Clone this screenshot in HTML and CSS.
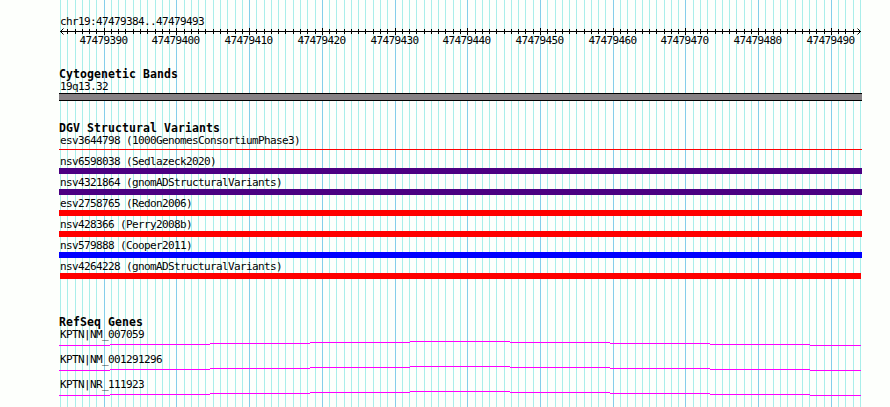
FILE: index.html
```html
<!DOCTYPE html>
<html lang="en">
<head>
<meta charset="utf-8">
<title>chr19:47479384..47479493</title>
<link rel="stylesheet" href="styles.css">
</head>
<body>
<main class="browser">
  <svg class="grid" width="803" height="407" shape-rendering="crispEdges" aria-hidden="true">
    <defs>
      <pattern id="minor" x="1" y="0" width="80" height="10" patternUnits="userSpaceOnUse">
        <path class="minor" d="M.5 0v10M7.5 0v10M15.5 0v10M22.5 0v10M29.5 0v10M36.5 0v10M44.5 0v10M51.5 0v10M58.5 0v10M65.5 0v10M73.5 0v10"/>
      </pattern>
    </defs>
    <rect width="803" height="407" fill="url(#minor)"/>
    <path class="major" d="M45.5 0v407M117.5 0v407M190.5 0v407M263.5 0v407M336.5 0v407M408.5 0v407M481.5 0v407M554.5 0v407M626.5 0v407M699.5 0v407M772.5 0v407"/>
  </svg>

  <header class="scale">
    <p class="label">chr19:47479384..47479493</p>
    <svg class="ruler" width="803" height="20">
      <defs>
        <pattern id="ticks" x="1" y="1" width="80" height="5" patternUnits="userSpaceOnUse">
          <path class="ink" d="M7.5 0v5M15.5 0v5M22.5 0v5M29.5 0v5M36.5 0v5M44.5 0v5M51.5 0v5M58.5 0v5M65.5 0v5M73.5 0v5M.5 0v5"/>
        </pattern>
      </defs>
      <g shape-rendering="crispEdges">
        <rect x="5" y="1" width="794" height="5" fill="url(#ticks)"/>
        <path class="ink" d="M1 3.5H802M45.5 0v7M117.5 0v7M190.5 0v7M263.5 0v7M336.5 0v7M408.5 0v7M481.5 0v7M554.5 0v7M626.5 0v7M699.5 0v7M772.5 0v7"/>
      </g>
      <path class="ink" d="M4.5 .5l-3 3l3 3M798.5 .5l3 3l-3 3"/>
      <g class="numbers">
        <text x="20.5" y="16">47479390</text><text x="92.5" y="16">47479400</text><text x="165.5" y="16">47479410</text><text x="238.5" y="16">47479420</text><text x="311.5" y="16">47479430</text><text x="383.5" y="16">47479440</text><text x="456.5" y="16">47479450</text><text x="529.5" y="16">47479460</text><text x="601.5" y="16">47479470</text><text x="674.5" y="16">47479480</text><text x="747.5" y="16">47479490</text>
      </g>
    </svg>
  </header>

  <section class="track bands">
    <h2>Cytogenetic Bands</h2>
    <p class="label">19q13.32</p>
    <div class="band"></div>
  </section>

  <section class="track variants">
    <h2>DGV Structural Variants</h2>
    <div class="feature"><p class="label">esv3644798 (1000GenomesConsortiumPhase3)</p><div class="bar thin"></div></div>
    <div class="feature"><p class="label">nsv6598038 (Sedlazeck2020)</p><div class="bar indigo"></div></div>
    <div class="feature"><p class="label">nsv4321864 (gnomADStructuralVariants)</p><div class="bar indigo"></div></div>
    <div class="feature"><p class="label">esv2758765 (Redon2006)</p><div class="bar red"></div></div>
    <div class="feature"><p class="label">nsv428366 (Perry2008b)</p><div class="bar red"></div></div>
    <div class="feature"><p class="label">nsv579888 (Cooper2011)</p><div class="bar blue"></div></div>
    <div class="feature"><p class="label">nsv4264228 (gnomADStructuralVariants)</p><div class="bar red inset"></div></div>
  </section>

  <section class="track genes">
    <h2>RefSeq Genes</h2>
    <div class="gene"><p class="label">KPTN|NM_007059</p>
      <svg width="803" height="5" shape-rendering="crispEdges"><path id="intron" class="intron" d="M0 4.5H51M51 3.5H151M151 2.5H251M251 1.5H351M351 .5H451M451 1.5H551M551 2.5H651M651 3.5H751M751 4.5H802"/></svg></div>
    <div class="gene"><p class="label">KPTN|NM_001291296</p>
      <svg width="803" height="5" shape-rendering="crispEdges"><use href="#intron"/></svg></div>
    <div class="gene"><p class="label">KPTN|NR_111923</p>
      <svg width="803" height="5" shape-rendering="crispEdges"><use href="#intron"/></svg></div>
  </section>
</main>
</body>
</html>
```
FILE: styles.css
```css
body {
  margin: 0;
  background: #fdfffc;
  color: #000;
  overflow: hidden;
}

.browser {
  position: relative;
  box-sizing: border-box;
  width: 803px;
  height: 407px;
  margin-left: 59px;
  padding-top: 16px;
  font: 11px/14px "DejaVu Sans Mono", monospace;
  letter-spacing: -0.622px;
}

.grid {
  position: absolute;
  top: 0;
  left: 0;
  z-index: -1;
}

.minor { stroke: #a9eeea; }
.major { stroke: #84ceea; }
.ink { stroke: #000; fill: none; }
.intron { stroke: #f0f; }

svg { display: block; }

p, h2 { margin: 0; }

.label {
  height: 12px;
  padding-left: 1px;
  white-space: nowrap;
}

.scale .label { line-height: 12px; }

h2 {
  height: 12px;
  font-size: 11.5px;
  line-height: 12px;
  font-weight: bold;
  letter-spacing: 0.077px;
}

.bands { margin-top: 20px; }

.band {
  box-sizing: border-box;
  height: 8px;
  margin-top: 1px;
  background: #868184;
  border: solid #000;
  border-width: 1px 0;
}

.variants { margin-top: 21px; }

.feature { height: 21px; }

.bar {
  height: 6px;
  margin-top: 1px;
}

.thin {
  height: 1px;
  margin-top: 3px;
  background: #f00;
}

.indigo { background: #4b0082; }
.red { background: #f00; }
.blue { background: #00f; }
.inset { margin-left: 1px; margin-right: 1px; }

.genes { margin-top: 35px; }

.gene { height: 25px; }
.gene svg { margin-top: 1px; }
```
